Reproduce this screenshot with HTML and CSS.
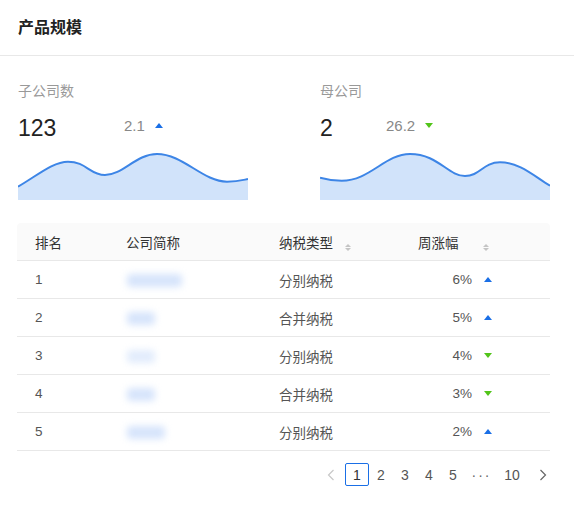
FILE: index.html
```html
<!DOCTYPE html>
<html lang="zh-CN">
<head>
<meta charset="utf-8">
<title>产品规模</title>
<link rel="stylesheet" href="styles.css">
</head>
<body>
<div class="card">
  <div class="card-head">产品规模</div>
  <div class="stats">
    <div class="stat">
      <div class="stat-label">子公司数</div>
      <div class="stat-row">
        <span class="stat-value stat-value--wide">123</span>
        <span class="stat-delta">2.1</span>
        <span class="tri tri-up"></span>
      </div>
      <svg class="spark" viewBox="0 0 230 50" width="230" height="50">
        <path class="spark-area" d="M0,36.7 C20,25 35,11.7 50,11.7 C68,11.7 72,25 87,25 C105,25 118,4 139,4 C165,4 185,31.7 209,31.7 C220,31.7 225,30 230,29 L230,50 L0,50 Z"/>
        <path class="spark-line" d="M0,36.7 C20,25 35,11.7 50,11.7 C68,11.7 72,25 87,25 C105,25 118,4 139,4 C165,4 185,31.7 209,31.7 C220,31.7 225,30 230,29"/>
      </svg>
    </div>
    <div class="stat">
      <div class="stat-label">母公司</div>
      <div class="stat-row">
        <span class="stat-value stat-value--narrow">2</span>
        <span class="stat-delta">26.2</span>
        <span class="tri tri-down"></span>
      </div>
      <svg class="spark" viewBox="0 0 230 50" width="230" height="50">
        <path class="spark-area" d="M0,27.7 C8,30 14,30.7 21.7,30.7 C50,30.7 65,4 90,4 C118,4 128,26 145,26 C160,26 163,12.3 180,12.3 C200,12.3 215,27 230,35.7 L230,50 L0,50 Z"/>
        <path class="spark-line" d="M0,27.7 C8,30 14,30.7 21.7,30.7 C50,30.7 65,4 90,4 C118,4 128,26 145,26 C160,26 163,12.3 180,12.3 C200,12.3 215,27 230,35.7"/>
      </svg>
    </div>
  </div>

  <table class="rank-table">
    <colgroup>
      <col class="c-rank"><col class="c-name"><col class="c-type"><col>
    </colgroup>
    <thead>
      <tr>
        <th>排名</th>
        <th>公司简称</th>
        <th><span>纳税类型</span><span class="sorter"><i class="s-up"></i><i class="s-down"></i></span></th>
        <th><span class="pct">周涨幅</span><span class="sorter sorter--pct"><i class="s-up"></i><i class="s-down"></i></span></th>
      </tr>
    </thead>
    <tbody>
      <tr><td>1</td><td><span class="blur blur-1"></span></td><td>分别纳税</td><td><span class="pct pct-val">6%</span><span class="tri tri-up tri-sm"></span></td></tr>
      <tr><td>2</td><td><span class="blur blur-2"></span></td><td>合并纳税</td><td><span class="pct pct-val">5%</span><span class="tri tri-up tri-sm"></span></td></tr>
      <tr><td>3</td><td><span class="blur blur-3"></span></td><td>分别纳税</td><td><span class="pct pct-val">4%</span><span class="tri tri-down tri-sm"></span></td></tr>
      <tr><td>4</td><td><span class="blur blur-2"></span></td><td>合并纳税</td><td><span class="pct pct-val">3%</span><span class="tri tri-down tri-sm"></span></td></tr>
      <tr><td>5</td><td><span class="blur blur-5"></span></td><td>分别纳税</td><td><span class="pct pct-val">2%</span><span class="tri tri-up tri-sm"></span></td></tr>
    </tbody>
  </table>

  <div class="pager">
    <span class="pg pg-prev disabled">
      <svg width="8" height="12" viewBox="0 0 8 12"><path d="M6.5 1 L1.5 6 L6.5 11" fill="none" stroke="currentColor" stroke-width="1.2"/></svg>
    </span>
    <span class="pg active">1</span>
    <span class="pg">2</span>
    <span class="pg">3</span>
    <span class="pg">4</span>
    <span class="pg">5</span>
    <span class="pg pg-more">···</span>
    <span class="pg pg-ten">10</span>
    <span class="pg pg-next">
      <svg width="8" height="12" viewBox="0 0 8 12"><path d="M1.5 1 L6.5 6 L1.5 11" fill="none" stroke="currentColor" stroke-width="1.2"/></svg>
    </span>
  </div>
</div>
</body>
</html>
```

FILE: styles.css
```css
* { box-sizing: border-box; }
html, body {
  margin: 0;
  padding: 0;
  background: #fff;
}
body {
  font-family: "Liberation Sans", "Noto Sans CJK SC", sans-serif;
  color: #555;
}
.card {
  width: 574px;
  height: 511px;
  background: #fff;
}
.card-head {
  height: 56px;
  line-height: 55px;
  padding-left: 18px;
  font-size: 16px;
  font-weight: bold;
  color: #222;
  border-bottom: 1px solid #e8e8e8;
}
.stats {
  display: grid;
  grid-template-columns: 302px 1fr;
  padding: 25px 0 0 18px;
}
.stat-label {
  font-size: 14px;
  line-height: 20px;
  color: #999;
}
.stat-row {
  display: flex;
  align-items: center;
  height: 32px;
  margin-top: 11px;
}
.stat-value {
  font-size: 23px;
  color: #222;
  line-height: 32px;
}
.stat-value--wide { width: 106px; }
.stat-value--narrow { width: 66px; }
.stat-delta {
  font-size: 15px;
  color: #888;
  margin-top: -6px;
}
.tri {
  display: inline-block;
  width: 0;
  height: 0;
  border-left: 4.5px solid transparent;
  border-right: 4.5px solid transparent;
  margin-left: 10px;
  margin-top: -6px;
}
.tri-up { border-bottom: 5px solid #1a6fe6; }
.tri-down { border-top: 5px solid #52c41a; }
.tri-sm { margin-top: 0; margin-left: 12px; vertical-align: 2px; }
.spark {
  display: block;
  margin-top: 6px;
}
.spark-area { fill: #d1e3fa; }
.spark-line {
  fill: none;
  stroke: #3d85e6;
  stroke-width: 2;
}

.rank-table {
  margin: 23px 0 0 17px;
  width: 533px;
  border-collapse: separate;
  border-spacing: 0;
  table-layout: fixed;
  font-size: 13.5px;
}
.c-rank { width: 91px; }
.c-name { width: 153px; }
.c-type { width: 139px; }
.rank-table th,
.rank-table td {
  height: 38px;
  padding: 0 0 0 18px;
  text-align: left;
  border-bottom: 1px solid #e8e8e8;
  white-space: nowrap;
}
.rank-table th {
  background: #fafafa;
  font-weight: normal;
  color: #333;
}
.rank-table th:first-child { border-top-left-radius: 4px; }
.rank-table th:last-child { border-top-right-radius: 4px; }
.rank-table td { color: #555; }
.sorter {
  display: inline-flex;
  flex-direction: column;
  gap: 1px;
  margin-left: 12px;
  vertical-align: 1px;
}
.sorter--pct { margin-left: 11px; }
.sorter i {
  display: block;
  width: 0;
  height: 0;
  border-left: 3px solid transparent;
  border-right: 3px solid transparent;
}
.sorter .s-up { border-bottom: 3.5px solid #c4c4c4; }
.sorter .s-down { border-top: 3.5px solid #c4c4c4; }
.pct {
  display: inline-block;
  width: 54px;
}
.pct-val { text-align: right; }
.blur {
  display: inline-block;
  height: 13px;
  background: #d6e4fb;
  border-radius: 4px;
  filter: blur(3.5px);
  vertical-align: middle;
  margin-left: 1px;
}
.blur-1 { width: 55px; }
.blur-2 { width: 28px; }
.blur-3 { width: 28px; background: #e2ecfc; }
.blur-5 { width: 38px; }

.pager {
  display: flex;
  justify-content: flex-end;
  align-items: center;
  margin-top: 12px;
  padding-right: 16px;
  font-size: 14px;
  color: #555;
}
.pg {
  display: inline-flex;
  align-items: center;
  justify-content: center;
  min-width: 24px;
  height: 23px;
  border: 1px solid transparent;
  border-radius: 2px;
}
.pg-prev { margin-right: 2px; }
.pg.active {
  border-color: #1a6fe6;
  color: #333;
}
.pg.disabled { color: #c8c8c8; }
.pg-more { width: 31px; color: #666; letter-spacing: 2px; padding-left: 2px; }
.pg-ten { width: 32px; }
.pg-next { width: 30px; color: #666; }
```
